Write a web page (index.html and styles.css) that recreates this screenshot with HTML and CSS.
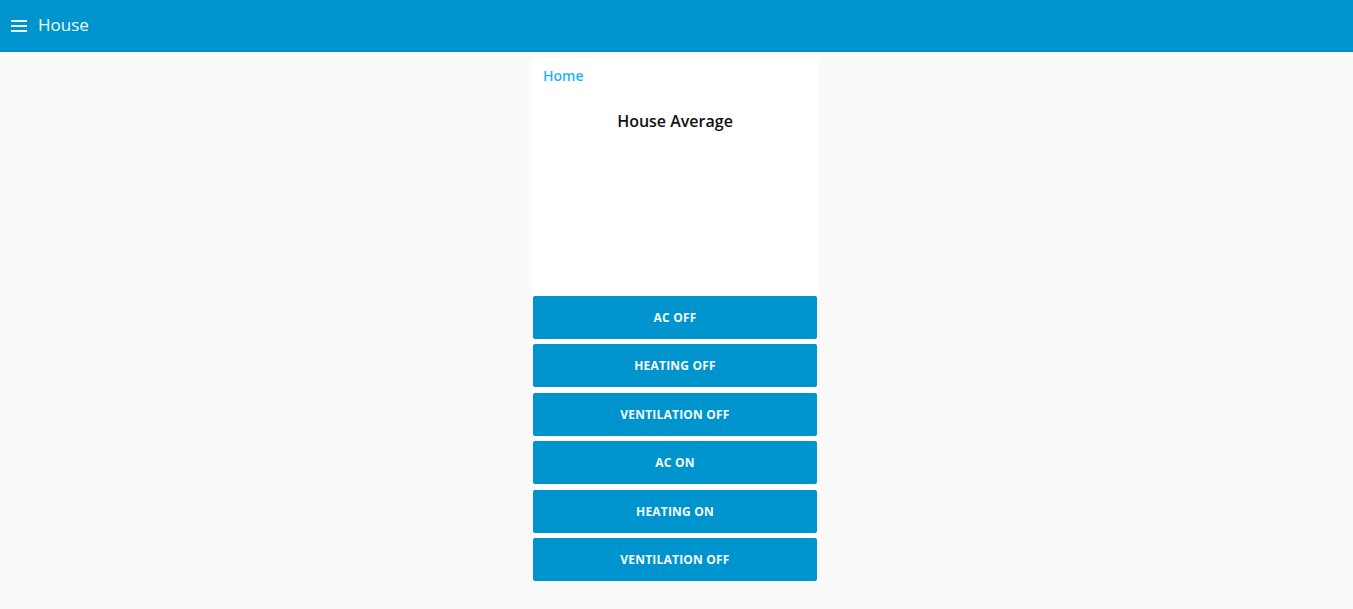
FILE: index.html
```html
<!DOCTYPE html>
<html>
<head>
<meta charset="utf-8">
<link rel="stylesheet" href="styles.css">
</head>
<body>
<header class="toolbar">
  <svg class="menu-icon" width="16" height="12" viewBox="0 0 16 12">
    <rect x="0" y="0" width="16" height="2" fill="#e6f4fb"/>
    <rect x="0" y="5" width="16" height="2" fill="#e6f4fb"/>
    <rect x="0" y="10" width="16" height="2" fill="#e6f4fb"/>
  </svg>
  <span class="title">House</span>
</header>
<main class="content">
  <section class="card">
    <div class="card-top">
      <a class="home-link">Home</a>
      <div class="chart-title">House Average</div>
    </div>
    <div class="buttons">
      <button class="btn">AC OFF</button>
      <button class="btn">HEATING OFF</button>
      <button class="btn">VENTILATION OFF</button>
      <button class="btn">AC ON</button>
      <button class="btn">HEATING ON</button>
      <button class="btn">VENTILATION OFF</button>
    </div>
  </section>
</main>
</body>
</html>
```
FILE: styles.css
```css
html, body {
  margin: 0;
  padding: 0;
  background: #fafafa;
  font-family: "Open Sans", "Noto Sans", sans-serif;
}
.toolbar {
  height: 52px;
  background: #0094ce;
  display: flex;
  align-items: center;
  padding-left: 11px;
  box-sizing: border-box;
}
.menu-icon {
  display: block;
  margin-right: 11px;
}
.title {
  color: #f2f9fc;
  font-size: 17px;
  line-height: 1;
  margin-top: -4px;
}
.content {
  display: flex;
  justify-content: center;
  padding-top: 6px;
}
.card {
  width: 286px;
  margin-left: -3px;
  background: #ffffff;
  display: flex;
  flex-direction: column;
}
.card-top {
  height: 238px;
}
.home-link {
  display: block;
  color: #1fb4f5;
  font-size: 14px;
  padding: 9px 0 0 11px;
  line-height: 18px;
  font-weight: 600;
}
.chart-title {
  text-align: center;
  font-size: 16px;
  font-weight: 600;
  color: #111;
  margin-top: 26px;
  line-height: 20px;
}
.buttons {
  display: flex;
  flex-direction: column;
  gap: 5.4px;
  padding: 0 1px;
}
.btn {
  height: 43px;
  border: none;
  border-radius: 2px;
  background: #0094ce;
  color: #f4fafd;
  font-family: "Open Sans", "Noto Sans", sans-serif;
  font-size: 12px;
  font-weight: 700;
  letter-spacing: 0.2px;
  padding: 0;
}
```
